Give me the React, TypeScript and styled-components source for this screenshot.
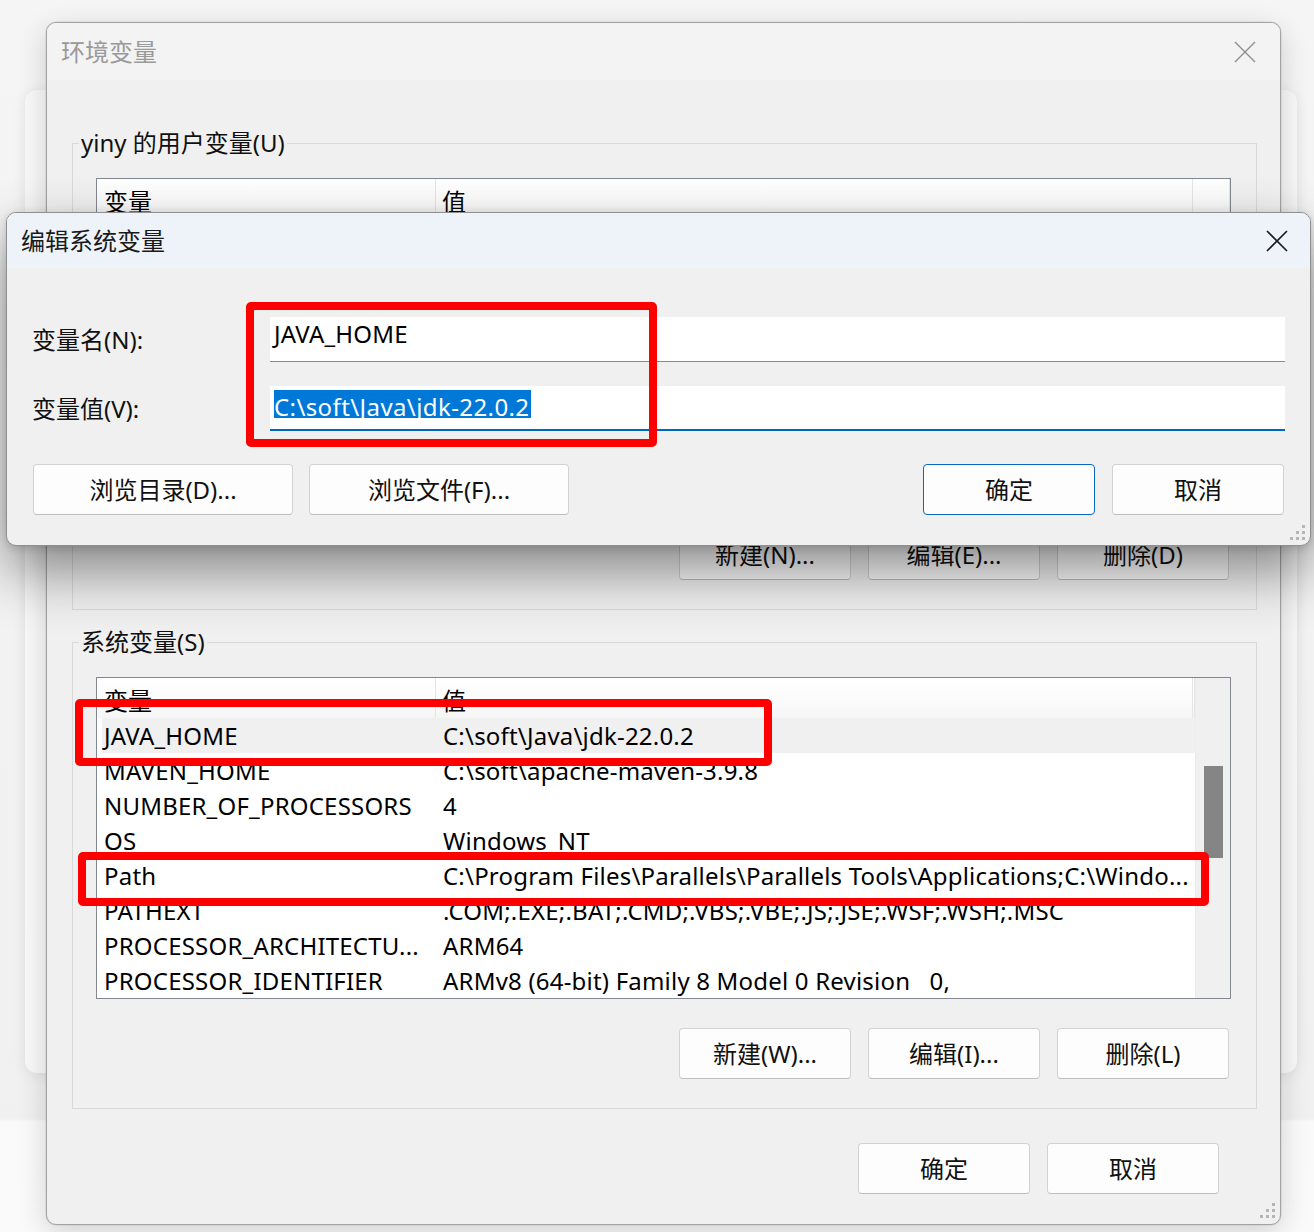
import React from "react";
import styled, { createGlobalStyle, css } from "styled-components";

const FONT = `"Noto Sans", "Noto Sans CJK SC", sans-serif`;

const GlobalStyle = createGlobalStyle`
  html, body { margin: 0; padding: 0; }
  body {
    width: 1314px;
    height: 1232px;
    overflow: hidden;
    font-family: ${FONT};
    background: #f1f1f1;
    color: #000;
  }
  * { box-sizing: border-box; }
`;

const Desktop = styled.div`
  position: relative;
  width: 1314px;
  height: 1232px;
  overflow: hidden;
  background: linear-gradient(
    to bottom,
    #f5f5f5 0,
    #f0f0f0 1119px,
    #f9f9f9 1121px,
    #fafafa 100%
  );
`;

const BackWindow = styled.div`
  position: absolute;
  left: 25px;
  top: 90px;
  width: 1272px;
  height: 983px;
  background: #f8f8f8;
  border-radius: 12px;
  box-shadow: 0 2px 14px rgba(0, 0, 0, 0.08);
`;

const Window = styled.section`
  position: absolute;
  left: 46px;
  top: 22px;
  width: 1235px;
  height: 1203px;
  display: flex;
  flex-direction: column;
  background: #f0f0f0;
  border: 1px solid #a3a3a3;
  border-radius: 10px;
  box-shadow: 0 8px 28px rgba(0, 0, 0, 0.16), 0 0 0 0.5px rgba(0, 0, 0, 0.1);
  overflow: hidden;
`;

const TitleBar = styled.header<{ $active?: boolean; $h: number; $pr: number }>`
  display: flex;
  align-items: center;
  justify-content: space-between;
  height: ${(p) => p.$h}px;
  flex: none;
  padding: 0 ${(p) => p.$pr}px 0 14px;
  background: ${(p) => (p.$active ? "#eef3fa" : "#f3f3f3")};
`;

const Title = styled.h1<{ $active?: boolean }>`
  margin: 0;
  font-size: 24px;
  font-weight: 400;
  line-height: 32px;
  color: ${(p) => (p.$active ? "#1a1a1a" : "#9a9a9a")};
`;

const CloseGlyph = styled.svg<{ $active?: boolean }>`
  display: block;
  width: 22px;
  height: 22px;
  path {
    stroke: ${(p) => (p.$active ? "#1c1c1c" : "#8e8e8e")};
    stroke-width: ${(p) => (p.$active ? 1.7 : 1.4)};
    fill: none;
  }
`;

const CloseIcon = ({ active }: { active?: boolean }) => (
  <CloseGlyph $active={active} viewBox="0 0 22 22">
    <path d="M1 1 L21 21 M21 1 L1 21" />
  </CloseGlyph>
);

const MainBody = styled.div`
  flex: 1;
  position: relative;
  display: flex;
  flex-direction: column;
  padding: 48px 23px 0 25px;
`;

const Group = styled.fieldset<{ $gapTop?: number }>`
  margin: ${(p) => p.$gapTop ?? 0}px 0 0 0;
  padding: 20px 0 29px 0;
  min-width: 0;
  border: 1px solid #d9d9d9;
`;

const Legend = styled.legend`
  margin-left: 6px;
  padding: 0 2px;
  font-size: 24px;
  line-height: 30px;
  color: #111;
`;

const GroupInner = styled.div`
  display: flex;
  flex-direction: column;
  gap: 29px;
  padding: 0 25px 0 23px;
`;

const ListView = styled.div`
  display: flex;
  height: 322px;
  border: 1px solid #828790;
  background: #fff;
`;

const Table = styled.div`
  flex: 1;
  min-width: 0;
  display: flex;
  flex-direction: column;
  overflow: hidden;
`;

const HeaderRow = styled.div`
  display: grid;
  grid-template-columns: 339px 757px 1fr;
  height: 40px;
  flex: none;
  background: linear-gradient(to bottom, #ffffff 0%, #fbfbfb 60%, #f5f5f5 100%);
`;

const HeaderCell = styled.div<{ $pl: number }>`
  padding-left: ${(p) => p.$pl}px;
  border-right: 1px solid #e5e5e5;
  font-size: 24px;
  line-height: 46px;
  white-space: nowrap;
  overflow: hidden;
`;

const Row = styled.div<{ $selected?: boolean }>`
  display: grid;
  grid-template-columns: 334px 1fr;
  height: 35px;
  flex: none;
  margin-left: 5px;
  background: ${(p) => (p.$selected ? "#f0f0f0" : "transparent")};
`;

const Cell = styled.div<{ $pl: number }>`
  padding-left: ${(p) => p.$pl}px;
  font-size: 24px;
  line-height: 36px;
  letter-spacing: 0.2px;
  white-space: pre;
  overflow: hidden;
`;

const ScrollTrack = styled.div`
  width: 35px;
  flex: none;
  display: flex;
  flex-direction: column;
  align-items: center;
  padding-top: 88px;
  background: #f0f0f0;
  border-left: 1px solid #ececec;
`;

const ScrollThumb = styled.div`
  width: 19px;
  height: 92px;
  background: #858585;
`;

const ButtonRow = styled.div<{ $pr?: number }>`
  display: flex;
  justify-content: flex-end;
  gap: 17px;
  padding-right: ${(p) => p.$pr ?? 0}px;
`;

const Button = styled.button<{ $w: number; $primary?: boolean }>`
  width: ${(p) => p.$w}px;
  height: 51px;
  flex: none;
  padding: 0;
  margin: 0;
  font-family: ${FONT};
  font-size: 24px;
  line-height: 32px;
  color: #111;
  background: #fdfdfd;
  border: 1px solid #d2d2d2;
  border-bottom-color: #bdbdbd;
  border-radius: 4px;
  ${(p) =>
    p.$primary &&
    css`
      border: 1px solid #0a67c4;
    `}
`;

const Footer = styled.div`
  display: flex;
  justify-content: flex-end;
  gap: 17px;
  margin-top: 34px;
  padding-right: 38px;
`;

const GripSvg = styled.svg`
  position: absolute;
  width: 16px;
  height: 16px;
  rect {
    fill: #b5b5b5;
  }
`;

const MainGrip = styled(GripSvg)`
  right: 4px;
  bottom: 5px;
`;

const DialogGrip = styled(GripSvg)`
  right: 4px;
  bottom: 4px;
`;

const GripDots = () => (
  <>
    <rect x="12" y="0" width="3" height="3" />
    <rect x="6" y="6" width="3" height="3" />
    <rect x="12" y="6" width="3" height="3" />
    <rect x="0" y="12" width="3" height="3" />
    <rect x="6" y="12" width="3" height="3" />
    <rect x="12" y="12" width="3" height="3" />
  </>
);

const Dialog = styled.section`
  position: absolute;
  left: 6px;
  top: 212px;
  width: 1305px;
  height: 334px;
  display: flex;
  flex-direction: column;
  background: #f0f0f0;
  border: 1px solid #8f8f8f;
  border-radius: 10px;
  overflow: hidden;
  box-shadow: 0 26px 56px rgba(0, 0, 0, 0.44), 0 2px 8px rgba(0, 0, 0, 0.15);
  z-index: 5;
`;

const DialogBody = styled.div`
  flex: 1;
  position: relative;
  padding: 49px 25px 0 25px;
`;

const FieldGrid = styled.div`
  display: grid;
  grid-template-columns: 238px 1fr;
  row-gap: 24px;
  align-items: center;
`;

const FieldLabel = styled.label`
  font-size: 24px;
  line-height: 32px;
  color: #111;
`;

const TextBox = styled.div<{ $focused?: boolean }>`
  height: 45px;
  padding-left: 4px;
  background: #fff;
  font-size: 24px;
  line-height: 34px;
  letter-spacing: 0.2px;
  white-space: pre;
  border-bottom: ${(p) => (p.$focused ? "2px solid #0067c0" : "1px solid #8a8a8a")};
`;

const Selection = styled.span`
  display: inline-block;
  vertical-align: top;
  height: 28px;
  margin-top: 4px;
  padding-right: 2px;
  line-height: 34px;
  letter-spacing: 0.4px;
  background: #0078d7;
  color: #fff;
  overflow: visible;
`;

const DialogButtons = styled.div`
  display: flex;
  align-items: center;
  justify-content: space-between;
  margin-top: 33px;
  padding: 0 1px;
`;

const ButtonCluster = styled.div<{ $gap: number }>`
  display: flex;
  gap: ${(p) => p.$gap}px;
`;

const Annotation = styled.div<{ $x: number; $y: number; $w: number; $h: number }>`
  position: absolute;
  left: ${(p) => p.$x}px;
  top: ${(p) => p.$y}px;
  width: ${(p) => p.$w}px;
  height: ${(p) => p.$h}px;
  border: 8px solid #ff0000;
  border-radius: 5px;
  z-index: 10;
  pointer-events: none;
`;

type Var = { name: string; value: string; selected?: boolean };

const userVars: Var[] = [];

const systemVars: Var[] = [
  { name: "JAVA_HOME", value: "C:\\soft\\Java\\jdk-22.0.2", selected: true },
  { name: "MAVEN_HOME", value: "C:\\soft\\apache-maven-3.9.8" },
  { name: "NUMBER_OF_PROCESSORS", value: "4" },
  { name: "OS", value: "Windows_NT" },
  {
    name: "Path",
    value: "C:\\Program Files\\Parallels\\Parallels Tools\\Applications;C:\\Windo...",
  },
  { name: "PATHEXT", value: ".COM;.EXE;.BAT;.CMD;.VBS;.VBE;.JS;.JSE;.WSF;.WSH;.MSC" },
  { name: "PROCESSOR_ARCHITECTU...", value: "ARM64" },
  { name: "PROCESSOR_IDENTIFIER", value: "ARMv8 (64-bit) Family 8 Model 0 Revision   0," },
];

const VarList = ({ vars, scroll }: { vars: Var[]; scroll?: boolean }) => (
  <ListView>
    <Table>
      <HeaderRow>
        <HeaderCell $pl={7}>变量</HeaderCell>
        <HeaderCell $pl={6}>值</HeaderCell>
        <HeaderCell $pl={0} />
      </HeaderRow>
      {vars.map((v) => (
        <Row key={v.name} $selected={v.selected}>
          <Cell $pl={2}>{v.name}</Cell>
          <Cell $pl={7}>{v.value}</Cell>
        </Row>
      ))}
    </Table>
    {scroll && (
      <ScrollTrack>
        <ScrollThumb />
      </ScrollTrack>
    )}
  </ListView>
);

export default function App() {
  return (
    <>
      <GlobalStyle />
      <Desktop>
        <BackWindow />
        <Window>
          <TitleBar $h={57} $pr={24}>
            <Title>环境变量</Title>
            <CloseIcon />
          </TitleBar>
          <MainBody>
            <Group>
              <Legend>yiny 的用户变量(U)</Legend>
              <GroupInner>
                <VarList vars={userVars} />
                <ButtonRow $pr={2}>
                  <Button $w={172}>新建(N)...</Button>
                  <Button $w={172}>编辑(E)...</Button>
                  <Button $w={172}>删除(D)</Button>
                </ButtonRow>
              </GroupInner>
            </Group>
            <Group $gapTop={17}>
              <Legend>系统变量(S)</Legend>
              <GroupInner>
                <VarList vars={systemVars} scroll />
                <ButtonRow $pr={2}>
                  <Button $w={172}>新建(W)...</Button>
                  <Button $w={172}>编辑(I)...</Button>
                  <Button $w={172}>删除(L)</Button>
                </ButtonRow>
              </GroupInner>
            </Group>
            <Footer>
              <Button $w={172}>确定</Button>
              <Button $w={172}>取消</Button>
            </Footer>
            <MainGrip viewBox="0 0 16 16">
              <GripDots />
            </MainGrip>
          </MainBody>
        </Window>

        <Dialog>
          <TitleBar $active $h={55} $pr={22}>
            <Title $active>编辑系统变量</Title>
            <CloseIcon active />
          </TitleBar>
          <DialogBody>
            <FieldGrid>
              <FieldLabel>变量名(N):</FieldLabel>
              <TextBox>JAVA_HOME</TextBox>
              <FieldLabel>变量值(V):</FieldLabel>
              <TextBox $focused>
                <Selection>C:\soft\Java\jdk-22.0.2</Selection>
              </TextBox>
            </FieldGrid>
            <DialogButtons>
              <ButtonCluster $gap={16}>
                <Button $w={260}>浏览目录(D)...</Button>
                <Button $w={260}>浏览文件(F)...</Button>
              </ButtonCluster>
              <ButtonCluster $gap={17}>
                <Button $w={172} $primary>
                  确定
                </Button>
                <Button $w={172}>取消</Button>
              </ButtonCluster>
            </DialogButtons>
            <DialogGrip viewBox="0 0 16 16">
              <GripDots />
            </DialogGrip>
          </DialogBody>
        </Dialog>

        <Annotation $x={246} $y={302} $w={411} $h={145} />
        <Annotation $x={75} $y={699} $w={697} $h={67} />
        <Annotation $x={78} $y={852} $w={1131} $h={54} />
      </Desktop>
    </>
  );
}
